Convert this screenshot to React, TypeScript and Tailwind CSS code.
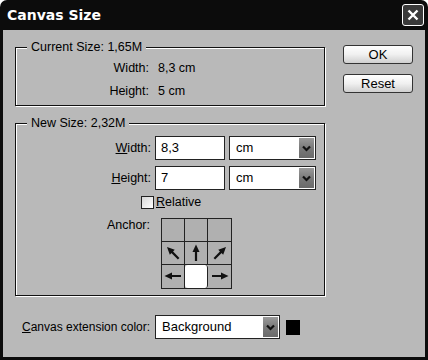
import { FC } from "react";

const font = { fontFamily: '"Liberation Sans", Arial, sans-serif' };

const DropButton: FC = () => (
    <div className="w-[15px] h-full bg-gradient-to-b from-[#9a9a9a] via-[#7a7a7a] to-[#6a6a6a] flex items-center justify-center">
        <svg width="9" height="7" viewBox="0 0 9 7">
            <path d="M1 1.5 L4.5 5 L8 1.5" fill="none" stroke="#111" strokeWidth="2.2" />
        </svg>
    </div>
);

const Select: FC<{ value: string; w: string }> = ({ value, w }) => (
    <div className={`${w} h-[24px] border border-[#222] bg-white flex items-stretch`}>
        <div className="flex-1 flex items-center pl-[6px] text-[13px] text-black">{value}</div>
        <div className="py-[1px] pr-[1px]">
            <DropButton />
        </div>
    </div>
);

const Arrow: FC<{ rot: number }> = ({ rot }) => (
    <svg width="22" height="22" viewBox="0 0 22 22">
        <g transform={`rotate(${rot} 11 11)`}>
            <path d="M11 19 L11 8" stroke="#111" strokeWidth="2.2" />
            <path d="M11 2.5 L7.5 10 L14.5 10 Z" fill="#111" />
        </g>
    </svg>
);

const cells: (number | null | "sel")[] = [null, null, null, -45, 0, 45, -90, "sel", 90];

export default function App() {
    return (
        <div className="w-[428px] h-[360px] bg-[#0c0c0c] rounded-t-[7px] flex flex-col overflow-hidden" style={font}>
            {/* TITLE BAR */}
            <div className="h-[30px] flex-none flex items-center justify-between pl-[7px] pr-[4px]">
                <span className="text-white font-bold" style={{ fontFamily: '"DejaVu Sans", "Liberation Sans", sans-serif', fontSize: 14 }}>Canvas Size</span>
                <div className="w-[22px] h-[22px] rounded-[3px] border border-white bg-[#3a3a3a] flex items-center justify-center">
                    <svg width="12" height="12" viewBox="0 0 12 12">
                        <path d="M1.5 1.5 L10.5 10.5 M10.5 1.5 L1.5 10.5" stroke="#fff" strokeWidth="2.4" />
                    </svg>
                </div>
            </div>

            {/* BODY */}
            <div className="flex-1 mx-[3px] mb-[3px] bg-[#b9b9b9] text-[12.5px] text-black pt-[17px] pl-[12px] flex flex-col">
                <div className="flex">
                    <div className="w-[310px] flex flex-col">
                        {/* CURRENT SIZE */}
                        <div className="relative h-[59px] border border-[#111] shadow-[inset_1px_1px_0_#fff,1px_1px_0_#fff] pt-[12px]">
                            <span className="absolute -top-[9px] left-[11px] px-[4px] bg-[#b9b9b9] leading-[16px]">Current Size: 1,65M</span>
                            <div className="grid grid-cols-[133px_auto] gap-x-[9px] gap-y-[7px] leading-[16px]">
                                <span className="text-right">Width:</span>
                                <span>8,3 cm</span>
                                <span className="text-right">Height:</span>
                                <span>5 cm</span>
                            </div>
                        </div>

                        {/* NEW SIZE */}
                        <div className="relative mt-[17px] h-[173px] border border-[#111] shadow-[inset_1px_1px_0_#fff,1px_1px_0_#fff] pt-[12px]">
                            <span className="absolute -top-[9px] left-[11px] px-[4px] bg-[#b9b9b9] leading-[16px]">New Size: 2,32M</span>
                            <div className="flex flex-col gap-[6px]">
                                <div className="flex items-center">
                                    <span className="w-[135px] text-right"><u>W</u>idth:</span>
                                    <div className="ml-[4px] w-[70px] h-[24px] border border-[#222] bg-white flex items-center pl-[5px] text-[13px]">8,3</div>
                                    <div className="ml-[4px]"><Select value="cm" w="w-[87px]" /></div>
                                </div>
                                <div className="flex items-center">
                                    <span className="w-[135px] text-right"><u>H</u>eight:</span>
                                    <div className="ml-[4px] w-[70px] h-[24px] border border-[#222] bg-white flex items-center pl-[5px] text-[13px]">7</div>
                                    <div className="ml-[4px]"><Select value="cm" w="w-[87px]" /></div>
                                </div>
                            </div>
                            <div className="flex items-center mt-[3px] ml-[125px]">
                                <div className="w-[13px] h-[13px] border border-[#222] bg-gradient-to-br from-[#d8d8d8] to-white" />
                                <span className="ml-[2px]"><u>R</u>elative</span>
                            </div>
                            <div className="flex mt-[6px]">
                                <span className="w-[135px] text-right leading-[14px] pr-[1px]">Anchor:</span>
                                <div className="ml-[10px] grid grid-cols-3 grid-rows-3 w-[71px] h-[71px] border border-[#222] bg-[#b0b0b0]">
                                    {cells.map((c, i) => (
                                        <div
                                            key={i}
                                            className={`border-[#222] flex items-center justify-center ${i % 3 !== 2 ? "border-r" : ""} ${i < 6 ? "border-b" : ""} ${c === "sel" ? "bg-white rounded-[3px]" : ""}`}
                                        >
                                            {typeof c === "number" && <Arrow rot={c} />}
                                        </div>
                                    ))}
                                </div>
                            </div>
                        </div>
                    </div>

                    {/* BUTTONS */}
                    <div className="ml-[18px] flex flex-col gap-[10px] -mt-[2px]">
                        <button className="w-[70px] h-[19px] rounded-[3px] border border-[#333] bg-gradient-to-b from-white via-[#f0f0f0] to-[#cfcfcf] text-[13px] leading-[16px]">OK</button>
                        <button className="w-[70px] h-[19px] rounded-[3px] border border-[#333] bg-gradient-to-b from-white via-[#f0f0f0] to-[#cfcfcf] text-[13px] leading-[16px]">Reset</button>
                    </div>
                </div>

                {/* CANVAS EXTENSION COLOR */}
                <div className="flex items-center mt-[19px] ml-[7px]">
                    <span className="w-[133px] whitespace-nowrap text-[12px]"><u>C</u>anvas extension color:</span>
                    <Select value="Background" w="w-[125px]" />
                    <div className="ml-[6px] w-[14px] h-[15px] bg-black" />
                </div>
            </div>
        </div>
    );
}
